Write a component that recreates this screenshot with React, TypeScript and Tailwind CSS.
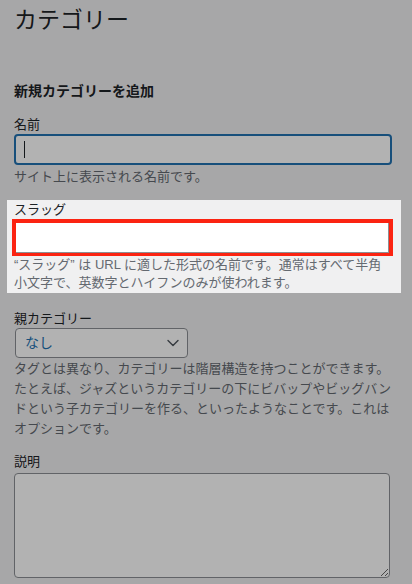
import { ChevronDown } from 'lucide-react';

const font = "font-['Liberation_Sans','Noto_Sans_CJK_JP',sans-serif]";

export default function App() {
  return (
    <div className={`relative h-[584px] overflow-hidden bg-[#f0f0f1] text-[#1d2327] ${font}`}>
      <div className="pl-[14px] pr-[20px] pt-[5px]">
        <h1 className="text-[23px] leading-[30px] font-normal">カテゴリー</h1>

        <h2 className="mt-[46px] text-[14px] leading-[20px] font-semibold">新規カテゴリーを追加</h2>

        {/* name */}
        <div className="mt-[15px]">
          <label className="block text-[13px] leading-[18px]">名前</label>
          <div className="flex h-[31px] w-full items-center rounded-[4px] border-2 border-[#2271b1] bg-white pl-[8px]">
            <span className="h-[17px] w-px bg-[#1d2327]" />
          </div>
          <p className="mt-[3px] text-[13px] leading-[18px] text-[#646970]">サイト上に表示される名前です。</p>
        </div>

        {/* slug - highlighted above the dim layer */}
        <div className="relative z-20 -ml-[7px] -mr-[9px] mt-[14px] bg-[#f0f0f1] pb-[2px] pl-[7px] pr-[9px] pt-[1px]">
          <label className="block text-[13px] leading-[18px]">スラッグ</label>
          <div className="-ml-[2px] -mr-[1px] h-[37px] border-4 border-[#fb2311]">
            <div className="h-[30px] w-full border-b border-r border-[#8c8f94] bg-white" />
          </div>
          <p className="text-[13px] leading-[17.5px] text-[#646970]">
            “スラッグ” は URL に適した形式の名前です。通常はすべて半角小文字で、英数字とハイフンのみが使われます。
          </p>
        </div>

        {/* parent */}
        <div className="mt-[17px]">
          <label className="block text-[13px] leading-[18px]">親カテゴリー</label>
          <div className="ml-px flex h-[30px] w-[173px] items-center justify-between rounded-[4px] border border-[#8c8f94] bg-white pl-[9px] pr-[4px]">
            <span className="text-[14px] text-[#2271b1]">なし</span>
            <ChevronDown className="h-[20px] w-[20px] text-[#50575e]" strokeWidth={1.7} />
          </div>
          <p className="mt-px text-[13px] leading-[20px] text-[#646970]">
            タグとは異なり、カテゴリーは階層構造を持つことができます。たとえば、ジャズというカテゴリーの下にビバップやビッグバンドという子カテゴリーを作る、といったようなことです。これはオプションです。
          </p>
        </div>

        {/* description */}
        <div className="mt-[14px]">
          <label className="block text-[13px] leading-[18px]">説明</label>
          <textarea className="mt-[2px] block h-[105px] w-[376px] rounded-[4px] border border-[#8c8f94] bg-white" />
        </div>
      </div>

      <div className="absolute inset-0 z-10 bg-black/30" />
    </div>
  );
}
